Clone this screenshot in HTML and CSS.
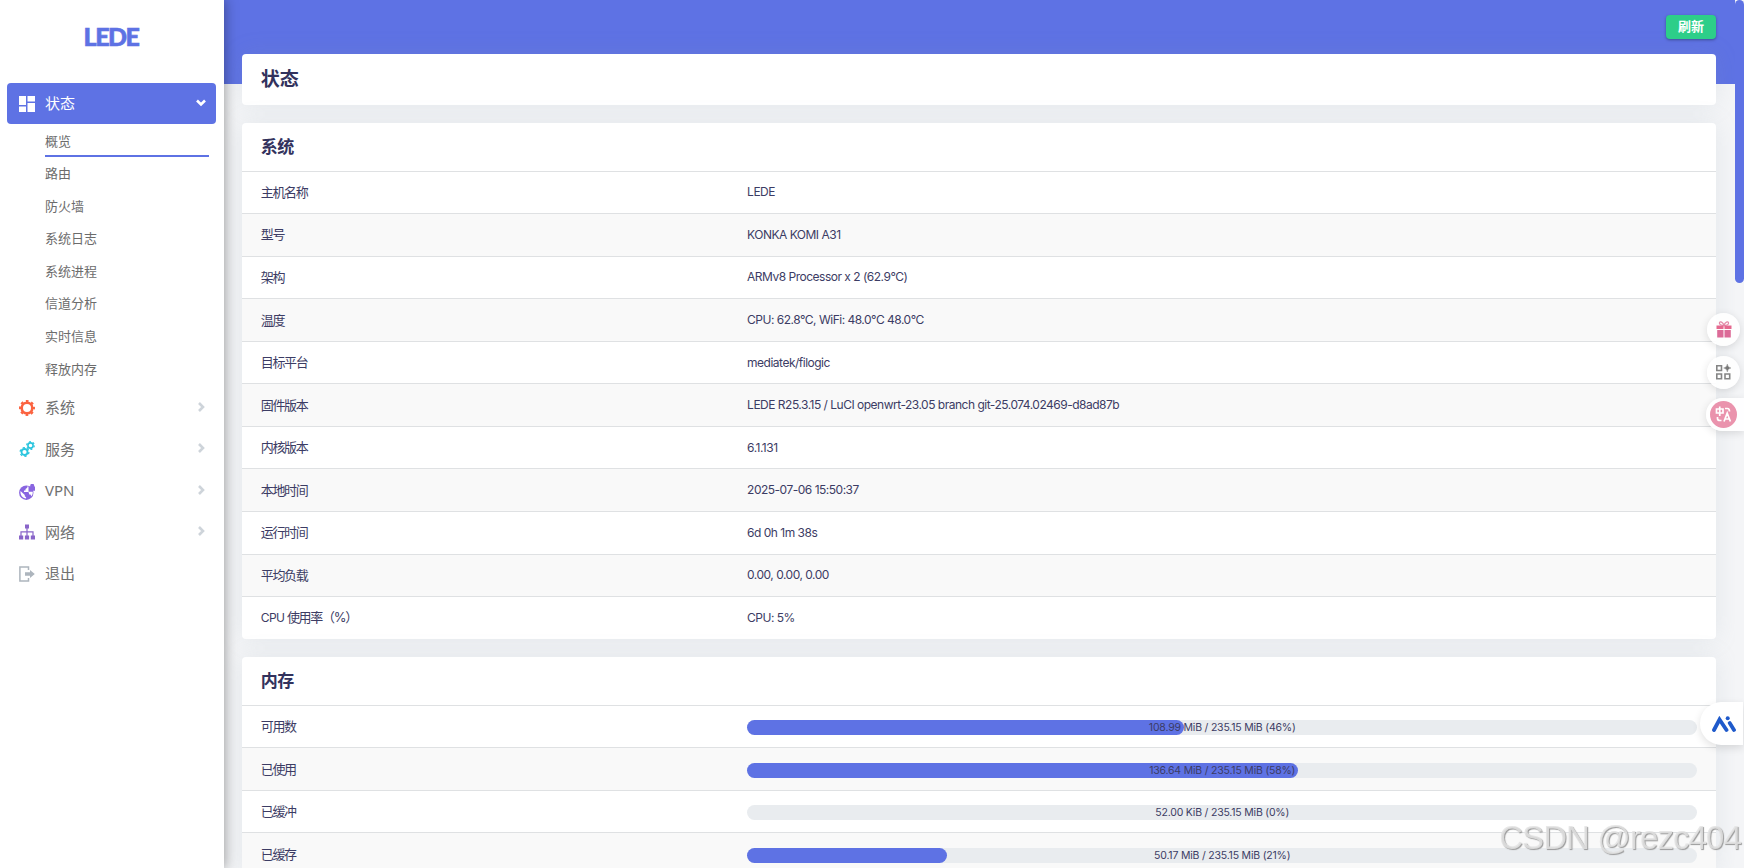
FILE: index.html
```html
<!DOCTYPE html>
<html lang="zh-CN">
  <head>
    <meta charset="UTF-8" />
    <meta name="viewport" content="width=device-width, initial-scale=1.0" />
    <title>LEDE - 概览 - LuCI</title>
    <link rel="stylesheet" href="styles.css">
  </head>
  <body>
    <!-- Sidebar -->
    <aside class="sidebar">
      <a class="brand">LEDE</a>
      <ul class="nav">
        <li>
          <a class="menu active">
            <svg class="icon" viewBox="0 0 16 16" fill="#fff"><path d="M0 0h7v9H0zM8.500 0H16v5.500H8.500zM0 10.500h7V16H0zM8.500 7H16v9H8.500z"/></svg>
            <span>状态</span>
            <svg class="arrow" viewBox="0 0 12 12" fill="none" stroke="#fff" stroke-width="2.600"><path d="M2 3.500l4 4 4-4"/></svg>
          </a>
          <ul class="submenu">
            <li class="current">概览</li>
            <li>路由</li>
            <li>防火墙</li>
            <li>系统日志</li>
            <li>系统进程</li>
            <li>信道分析</li>
            <li>实时信息</li>
            <li>释放内存</li>
          </ul>
        </li>
        <li>
          <a class="menu">
            <svg class="icon" viewBox="0 0 16 16" fill="none" stroke="#fb6340"><circle cx="8" cy="8" r="5.300" stroke-width="2.600"/><circle cx="8" cy="8" r="7" stroke-width="2" stroke-dasharray="2.700 2.798" stroke-dashoffset="1.350"/></svg>
            <span>系统</span>
            <svg class="arrow" viewBox="0 0 12 12" fill="none" stroke="#ced4da" stroke-width="2.600"><path d="M4 2l4 4-4 4"/></svg>
          </a>
        </li>
        <li>
          <a class="menu">
            <svg class="icon" viewBox="0 0 16 16" fill="none" stroke="#2bc5de"><circle cx="5.500" cy="11" r="3" stroke-width="1.800"/><circle cx="5.500" cy="11" r="4.400" stroke-width="1.300" stroke-dasharray="2.200 2.408"/><circle cx="11.500" cy="4.500" r="2.600" stroke-width="1.600"/><circle cx="11.500" cy="4.500" r="3.800" stroke-width="1.200" stroke-dasharray="1.900 2.080"/></svg>
            <span>服务</span>
            <svg class="arrow" viewBox="0 0 12 12" fill="none" stroke="#ced4da" stroke-width="2.600"><path d="M4 2l4 4-4 4"/></svg>
          </a>
        </li>
        <li>
          <a class="menu">
            <svg class="icon vpn" viewBox="0 0 16 16"><circle cx="7.300" cy="8.700" r="7.200" fill="#8965e0"/><path d="M1.500 7l4.300 4v1.200l1.300 1.100v1.300C3.500 14.200 1 11 1.500 7zM8.300 2.500v1.300L6.500 5v1.500H5v1.400h4.500l.8 2.600h1.200l.9 1.800c1.200-1.400 1.500-3 1.300-4.500H9.500V2.500z" fill="#fff"/><path d="M10.500 2.500h.7V1.700a2 2 0 0 1 4 0v.8h.8v4.300h-5.500z" fill="#8965e0"/></svg>
            <span>VPN</span>
            <svg class="arrow" viewBox="0 0 12 12" fill="none" stroke="#ced4da" stroke-width="2.600"><path d="M4 2l4 4-4 4"/></svg>
          </a>
        </li>
        <li>
          <a class="menu">
            <svg class="icon" viewBox="0 0 16 16" fill="#8965c9"><path d="M6 .5h4v4H6zM0 11.500h4.200v4H0zM5.900 11.500h4.200v4H5.900zM11.800 11.500H16v4h-4.200zM7.400 4.500h1.200v2.700h6V11.500h-1.200V8.400H8.600v3.100H7.400V8.400H2.600v3.100H1.400V7.200h6z"/></svg>
            <span>网络</span>
            <svg class="arrow" viewBox="0 0 12 12" fill="none" stroke="#ced4da" stroke-width="2.600"><path d="M4 2l4 4-4 4"/></svg>
          </a>
        </li>
        <li>
          <a class="menu">
            <svg class="icon" viewBox="0 0 16 16"><path d="M9.500 4V.900H.9v14.200h8.600V12" fill="none" stroke="#adb5bd" stroke-width="1.500"/><path d="M6 6.300h5V4l4.800 4L11 12V9.700H6z" fill="#adb5bd"/></svg>
            <span>退出</span>
          </a>
        </li>
      </ul>
    </aside>

    <!-- Content -->
    <div class="main">
      <header><button class="refresh">刷新</button></header>
      <div class="container">
        <div class="card title"><h2>状态</h2></div>

        <div class="card">
          <h3>系统</h3>
          <div class="tr"><div class="td">主机名称</div><div class="td value">LEDE</div></div>
          <div class="tr"><div class="td">型号</div><div class="td value">KONKA KOMI A31</div></div>
          <div class="tr"><div class="td">架构</div><div class="td value">ARMv8 Processor x 2 (62.9°C)</div></div>
          <div class="tr"><div class="td">温度</div><div class="td value">CPU: 62.8°C, WiFi: 48.0°C 48.0°C</div></div>
          <div class="tr"><div class="td">目标平台</div><div class="td value">mediatek/filogic</div></div>
          <div class="tr"><div class="td">固件版本</div><div class="td value">LEDE R25.3.15 / LuCI openwrt-23.05 branch git-25.074.02469-d8ad87b</div></div>
          <div class="tr"><div class="td">内核版本</div><div class="td value">6.1.131</div></div>
          <div class="tr"><div class="td">本地时间</div><div class="td value">2025-07-06 15:50:37</div></div>
          <div class="tr"><div class="td">运行时间</div><div class="td value">6d 0h 1m 38s</div></div>
          <div class="tr"><div class="td">平均负载</div><div class="td value">0.00, 0.00, 0.00</div></div>
          <div class="tr"><div class="td"><span class="latin">CPU</span> 使用率（%）</div><div class="td value">CPU: 5%</div></div>
        </div>

        <div class="card">
          <h3>内存</h3>
          <div class="tr"><div class="td">可用数</div><div class="td"><div class="progress"><div class="fill" style="width: 46%"></div><span>108.99 MiB / 235.15 MiB (46%)</span></div></div></div>
          <div class="tr"><div class="td">已使用</div><div class="td"><div class="progress"><div class="fill" style="width: 58%"></div><span>136.64 MiB / 235.15 MiB (58%)</span></div></div></div>
          <div class="tr"><div class="td">已缓冲</div><div class="td"><div class="progress"><div class="fill" style="width: 0%"></div><span>52.00 KiB / 235.15 MiB (0%)</span></div></div></div>
          <div class="tr"><div class="td">已缓存</div><div class="td"><div class="progress"><div class="fill" style="width: 21%"></div><span>50.17 MiB / 235.15 MiB (21%)</span></div></div></div>
        </div>
      </div>
    </div>

    <div class="scrollbar"><div class="thumb"></div></div>

    <!-- Floating tools -->
    <div class="tools">
      <div class="tool">
        <svg width="16" height="17" viewBox="0 0 16 17"><path d="M8 4.500C5 4.500 3 3.500 3.500 1.800S7 .800 8 4.500c1-3.700 4-4.400 4.500-2.700S11 4.500 8 4.500z" fill="none" stroke="#e38aa8" stroke-width="1.300"/><path d="M.5 4.500h7V8h-7zM8.500 4.500h7V8h-7z" fill="#e5688f"/><path d="M1.200 9h6.300v7.500H1.200zM8.500 9h6.300v7.500H8.500z" fill="#dc6b98"/></svg>
      </div>
      <div class="tool">
        <svg width="15" height="16" viewBox="0 0 15 16" fill="none" stroke="#858585" stroke-width="1.600"><path d="M.8 1.800h4.700v4.700H.8zM.8 10h4.700v4.700H.8zM9 10h4.700v4.700H9z"/><path d="M11.300 0q.4 3.600 3.700 4-3.300.4-3.700 4-.4-3.600-3.700-4 3.300-.4 3.700-4z" fill="#777" stroke-width=".4"/></svg>
      </div>
      <div class="tool translate">
        <svg width="27" height="27" viewBox="0 0 27 27" fill="none" stroke="#fff" stroke-width="1.700"><circle cx="13.500" cy="13.500" r="13.500" fill="#ea93ad" stroke="none"/><path d="M6.500 8h6.500v4H6.500zM9.750 5.500v9.500M15 7.500h2.500q2 0 2 3M7.500 16v1.500q0 2 2.500 2h1.500M14 20.500l3.200-8.300 3.200 8.300M15 18h4.300"/></svg>
      </div>
    </div>
    <div class="ai">
      <svg width="26" height="17" viewBox="0 0 26 17" fill="none" stroke="#1f5acb" stroke-width="3.800" stroke-linecap="round"><path d="M3 14l5.500-10.500 7 10.500M18.700 7l4.300 7"/><circle cx="16.700" cy="2.300" r="2" fill="#1f5acb" stroke="none"/></svg>
    </div>
    <div class="watermark">CSDN @rezc404</div>
  </body>
</html>
```
FILE: styles.css
```css
* {
  box-sizing: border-box;
}
body {
  margin: 0;
  height: 868px;
  overflow: hidden;
  display: flex;
  background: #f4f5f7;
  color: #3c3c64;
  font-family: Inter, "Noto Sans CJK SC", sans-serif;
  font-size: 13px;
}
ul {
  list-style: none;
  margin: 0;
  padding: 0;
}

/* sidebar */
.sidebar {
  position: relative;
  z-index: 2;
  width: 224px;
  flex-shrink: 0;
  background: #fff;
  box-shadow: 0 0 12px 1px rgba(0, 0, 0, 0.36);
  font-family: "Noto Sans", "Noto Sans CJK SC", sans-serif;
}
.brand {
  display: block;
  height: 83px;
  padding: 22px 2px 0 0;
  text-align: center;
  font-family: Lato, sans-serif;
  font-size: 25px;
  line-height: 29px;
  font-weight: 900;
  letter-spacing: -1.5px;
  color: #5e72e4;
  -webkit-text-stroke: 0.6px #5e72e4;
}
.nav {
  padding: 0 8px 0 7px;
}
.menu {
  display: flex;
  align-items: center;
  height: 41.5px;
  padding: 0 9px 0 12px;
  font-size: 15px;
  color: #707070;
}
.menu span {
  margin-top: -2px;
}
.menu.active {
  height: 41px;
  border-radius: 4px;
  background: #5e72e4;
  color: #fff;
}
.icon {
  width: 16px;
  height: 16px;
  margin-right: 10px;
}
.vpn {
  margin-top: 2px;
}
.arrow {
  width: 12px;
  height: 12px;
  margin: -2px 0 0 auto;
}
.submenu {
  padding: 0 7px 2px 38px;
}
.submenu li {
  height: 32.6px;
  line-height: 32px;
  font-size: 13px;
  color: #6c6c6c;
}
.submenu .current {
  height: 33px;
  line-height: 34px;
  border-bottom: 2px solid #5e72e4;
}

/* content */
.main {
  flex: 1;
}
header {
  height: 84px;
  padding: 15px 28px 0 0;
  background: #5e72e4;
  text-align: right;
}
.refresh {
  width: 50px;
  height: 24px;
  padding: 0 0 3px;
  border: 0;
  border-radius: 4px;
  background: #2dce89;
  color: #fff;
  font: bold 13px "Noto Sans CJK SC", sans-serif;
  line-height: 20px;
  box-shadow: 0 1px 3px rgba(0, 0, 0, 0.35);
}
.container {
  margin: -30px 28px 0 18px;
}
.card {
  margin-bottom: 18.600px;
  border-radius: 4px;
  overflow: hidden;
  background: #fff;
  box-shadow: 0 0 24px rgba(136, 152, 170, 0.15);
}
h2,
h3 {
  margin: 0;
  padding-left: 18.700px;
  color: #32325d;
  font-family: "Noto Sans CJK SC", sans-serif;
}
h2 {
  height: 50.500px;
  font-size: 19px;
  line-height: 47px;
}
h3 {
  height: 47.500px;
  font-size: 17px;
  line-height: 45px;
  letter-spacing: -0.5px;
}
.tr {
  display: flex;
  align-items: center;
  height: 42.550px;
  border-top: 1px solid #dfe1e3;
}
.tr:nth-child(odd) {
  background: #f9f9f9;
}
.td {
  width: 33%;
  padding: 0 18.700px 2px;
  letter-spacing: -1.3px;
  white-space: nowrap;
}
.td + .td {
  width: 67%;
  padding-bottom: 0;
}
.td + .value {
  padding-bottom: 1px;
  font-size: 12px;
  letter-spacing: -0.5px;
}
.latin {
  font-size: 12px;
  letter-spacing: -0.5px;
}
.progress {
  position: relative;
  height: 15px;
  margin-top: 2px;
  border-radius: 8px;
  background: #e9ecef;
  text-align: center;
  font-size: 10.500px;
  line-height: 15px;
  letter-spacing: -0.2px;
}
.fill {
  position: absolute;
  height: 15px;
  border-radius: 8px;
  background: #5e72e4;
}
.progress span {
  position: relative;
}

/* things lying over the page */
.scrollbar {
  position: fixed;
  top: 0;
  right: 0;
  width: 9px;
  height: 868px;
  background: #f4f5f7;
}
.thumb {
  height: 283px;
  border-radius: 5px;
  background: #5e72e4;
}
.tools {
  position: fixed;
  top: 313px;
  right: 0;
  width: 38px;
  display: grid;
  gap: 9.600px;
}
.tool {
  width: 33px;
  height: 33px;
  margin-left: 1px;
  display: flex;
  align-items: center;
  justify-content: center;
  border-radius: 50%;
  background: rgba(255, 255, 255, 0.9);
  box-shadow: 0 2px 8px rgba(0, 0, 0, 0.12);
}
.translate {
  width: 38px;
  margin-left: 0;
  padding-left: 4px;
  justify-content: flex-start;
  border-radius: 17px 0 0 17px;
}
.ai {
  position: fixed;
  top: 702px;
  right: 1px;
  width: 43px;
  height: 43px;
  padding: 14px 0 0 11px;
  border-radius: 22px 0 0 22px;
  background: #fff;
  box-shadow: 0 3px 9px rgba(0, 0, 0, 0.12);
}
.watermark {
  position: fixed;
  right: 3px;
  bottom: 11px;
  z-index: 3;
  font: 33px/38px "Liberation Sans", sans-serif;
  letter-spacing: -0.9px;
  color: rgba(228, 228, 228, 0.85);
  text-shadow: 1px 1px 1px #999;
}
```
